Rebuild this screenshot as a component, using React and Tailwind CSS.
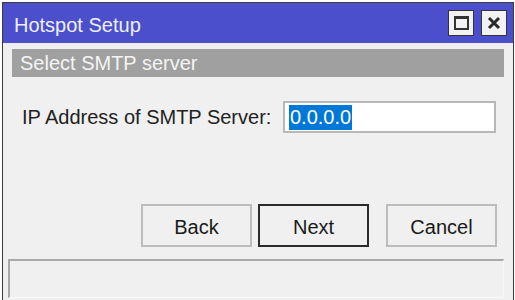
import React from 'react';

const font = { fontFamily: '"Liberation Sans", Arial, sans-serif' };

const WinButton = ({ label, primary }) => (
    <button
        className={`w-[111px] h-[43px] bg-[#f0f0f0] text-[20px] text-[#1a1a1a] pt-[2px] ${
            primary ? "border-2 border-[#2b2b2b]" : "border-2 border-[#bcbcbc]"
        }`}
    >
        {label}
    </button>
);

const App = () => {
    return (
        <div style={font} className="w-[515px] h-[300px] bg-white pt-[2px] pl-[2px] pr-[1px] overflow-hidden">
            <div className="h-[298px] border border-b-0 border-[#3a3a3a] bg-[#f0f0f0] flex flex-col">
                {/* title bar */}
                <div className="h-[40px] bg-[#4b4fcc] flex items-center justify-between pl-[11px] pr-[6px]">
                    <span className="text-[20px] text-[#eef0ff] pt-[4px]">Hotspot Setup</span>
                    <div className="flex gap-[7px] items-center">
                        <div className="w-[26px] h-[26px] bg-[#f2f2f2] border border-[#333] flex items-center justify-center">
                            <div className="w-[15px] h-[14px] border-2 border-t-[3px] border-[#333]" />
                        </div>
                        <div className="w-[26px] h-[26px] bg-[#f2f2f2] border border-[#333] flex items-center justify-center">
                            <svg width="14" height="14" viewBox="0 0 14 14">
                                <path d="M2 2 L12 12 M12 2 L2 12" stroke="#2a2a2a" strokeWidth="3" />
                            </svg>
                        </div>
                    </div>
                </div>

                <div className="flex-1 flex flex-col px-[9px] pt-[6px]">
                    {/* step header */}
                    <div className="h-[28px] bg-[#a0a0a0] flex items-center pl-[8px]">
                        <span className="text-[20px] text-[#f4f4f4]">Select SMTP server</span>
                    </div>

                    {/* field */}
                    <div className="flex items-center mt-[24px] pl-[10px]">
                        <span className="text-[20px] text-[#222] w-[261px]">IP Address of SMTP Server:</span>
                        <div className="w-[213px] h-[32px] bg-white border-2 border-[#b8b8b8] flex items-center pl-[4px]">
                            <span className="bg-[#0078d7] text-white text-[20px] leading-[25px] px-[1px]">0.0.0.0</span>
                        </div>
                    </div>

                    {/* buttons */}
                    <div className="flex justify-end mt-[71px] pr-[7px]">
                        <div className="flex gap-[6px]">
                            <WinButton label="Back" />
                            <WinButton label="Next" primary />
                        </div>
                        <div className="ml-[17px]">
                            <WinButton label="Cancel" />
                        </div>
                    </div>

                    {/* status bar */}
                    <div className="mt-[12px] -ml-[4px] h-[39px] border-t-2 border-l-2 border-[#a8a8a8] border-r border-r-[#fafafa] border-b border-b-[#fafafa]" />
                </div>
            </div>
        </div>
    );
};

export default App;
